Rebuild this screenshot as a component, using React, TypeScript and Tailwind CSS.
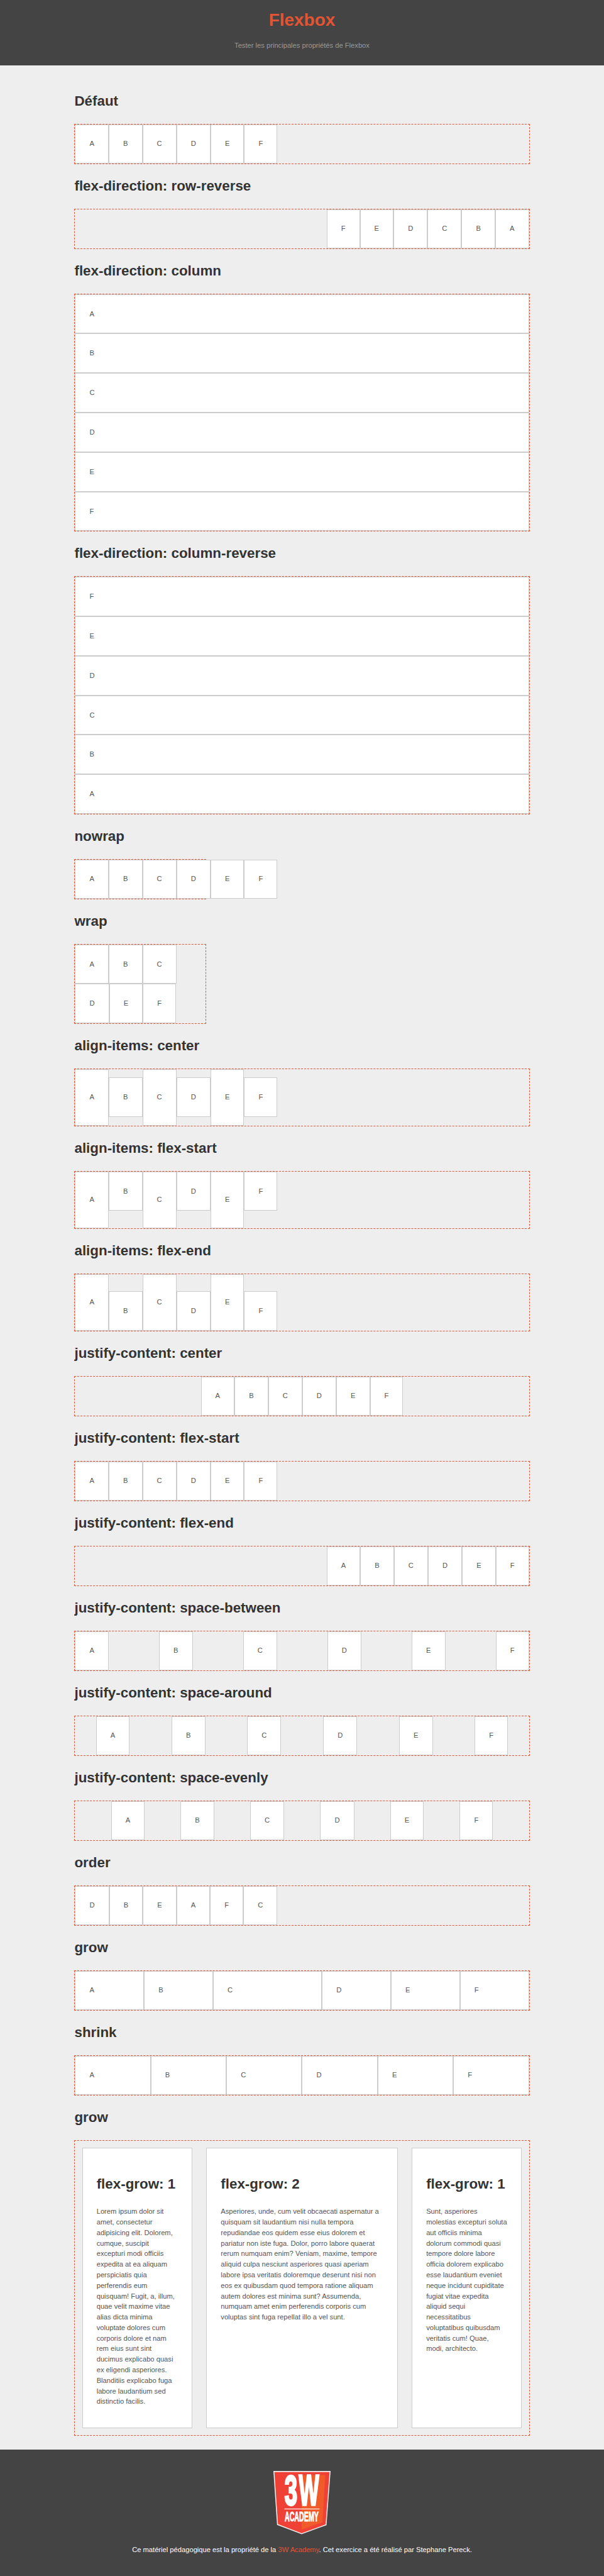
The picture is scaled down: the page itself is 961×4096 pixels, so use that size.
import type { ReactNode } from 'react';
import { clsx } from 'clsx';

const LETTERS = ['A', 'B', 'C', 'D', 'E', 'F'];

function Title({ children }: { children: ReactNode }) {
  return <h2 className="text-[22.37px] leading-[70.69px] font-bold text-[#333]">{children}</h2>;
}

function Item({ children, className }: { children: ReactNode; className?: string }) {
  return (
    <div
      className={clsx(
        'flex flex-col justify-center border border-[#ccc] bg-white px-[22.05px] text-[11.18px] leading-[16.78px]',
        className,
      )}
    >
      {children}
    </div>
  );
}

type DemoProps = {
  title: string;
  box?: string;
  items?: string[];
  itemClass?: (index: number) => string;
};

function Demo({ title, box = 'h-[64.32px]', items = LETTERS, itemClass }: DemoProps) {
  return (
    <section>
      <Title>{title}</Title>
      <div className={clsx('flex border border-dashed border-[#e25433]', box)}>
        {items.map((letter, i) => (
          <Item key={letter} className={itemClass?.(i)}>
            {letter}
          </Item>
        ))}
      </div>
    </section>
  );
}

function Card({ title, className, children }: { title: string; className: string; children: ReactNode }) {
  return (
    <article
      className={clsx(
        'mx-[11.18px] my-[11px] border border-[#ccc] bg-white px-[22.05px] pt-[22.1px] text-[11.18px] leading-[16.78px]',
        className,
      )}
    >
      <Title>{title}</Title>
      <p>{children}</p>
    </article>
  );
}

function Logo() {
  return (
    <svg
      viewBox="39 30 391 432"
      className="h-[100.6px] w-[91px] overflow-visible"
      preserveAspectRatio="none"
      aria-label="3W Academy"
    >
      <polygon points="39,30 430,30 402,400 232,462 64,398" fill="#f1f1f1" />
      <polygon points="46,37 423,37 396,395 232,455 70,393" fill="#ef4136" />
      <polygon points="232,58 394,58 374,380 232,430" fill="#f15a29" />
      <g fill="#fff" stroke="#fff" fontFamily="'Liberation Sans', Arial, sans-serif" fontWeight="700">
        <text transform="translate(115 264) scale(0.55 1)" fontSize="286" strokeWidth="14">
          3
        </text>
        <text transform="translate(213 264) scale(0.5 1)" fontSize="292" strokeWidth="14">
          W
        </text>
        <text transform="translate(116 373) scale(0.5 1)" fontSize="92" strokeWidth="4">
          ACADEMY
        </text>
      </g>
      <rect x="114" y="287" width="240" height="5" fill="#fff" />
    </svg>
  );
}

const tallOdd = (i: number) => (i % 2 === 0 ? 'h-[90.3px]' : 'h-[62.9px]');

export default function App() {
  return (
    <div className="flex h-[4096px] w-full flex-col bg-[#eee] font-['Liberation_Sans',Arial,sans-serif] text-[11.18px] leading-[16.78px] text-[#555]">
      <header className="flex h-[103.5px] shrink-0 flex-col items-center gap-[11.2px] bg-[#444] pt-[11.2px]">
        <h1 className="text-[27.96px] leading-[41.94px] font-bold text-[#e25433]">Flexbox</h1>
        <p className="text-[#999]">Tester les principales propriétés de Flexbox</p>
      </header>

      <main className="mx-auto flex w-[724.1px] shrink-0 flex-col py-[22.37px]">
        <Demo title="Défaut" />
        <Demo title="flex-direction: row-reverse" box="h-[64.32px] flex-row-reverse" />
        <Demo title="flex-direction: column" box="h-[378.9px] flex-col" itemClass={() => 'flex-1'} />
        <Demo title="flex-direction: column-reverse" box="h-[378.9px] flex-col-reverse" itemClass={() => 'flex-1'} />
        <Demo title="nowrap" box="h-[64.32px] w-[209.7px] flex-nowrap" />
        <Demo title="wrap" box="h-[127.2px] w-[209.7px] flex-wrap" />
        <Demo title="align-items: center" box="h-[92.3px] items-center" itemClass={tallOdd} />
        <Demo title="align-items: flex-start" box="h-[92.3px] items-start" itemClass={tallOdd} />
        <Demo title="align-items: flex-end" box="h-[92.3px] items-end" itemClass={tallOdd} />
        <Demo title="justify-content: center" box="h-[64.32px] justify-center" />
        <Demo title="justify-content: flex-start" box="h-[64.32px] justify-start" />
        <Demo title="justify-content: flex-end" box="h-[64.32px] justify-end" />
        <Demo title="justify-content: space-between" box="h-[64.32px] justify-between" />
        <Demo title="justify-content: space-around" box="h-[64.32px] justify-around" />
        <Demo title="justify-content: space-evenly" box="h-[64.32px] justify-evenly" />
        <Demo title="order" items={['D', 'B', 'E', 'A', 'F', 'C']} />
        <Demo title="grow" itemClass={(i) => (i === 2 ? 'flex-2' : 'flex-1')} />
        <Demo title="shrink" itemClass={() => 'w-[209.7px] shrink'} />

        <section>
          <Title>grow</Title>
          <div className="flex h-[470.6px] border border-dashed border-[#e25433]">
            <Card title="flex-grow: 1" className="flex-1">
              Lorem ipsum dolor sit amet, consectetur adipisicing elit. Dolorem, cumque, suscipit excepturi modi
              officiis expedita at ea aliquam perspiciatis quia perferendis eum quisquam! Fugit, a, illum, quae velit
              maxime vitae alias dicta minima voluptate dolores cum corporis dolore et nam rem eius sunt sint ducimus
              explicabo quasi ex eligendi asperiores. Blanditiis explicabo fuga labore laudantium sed distinctio
              facilis.
            </Card>
            <Card title="flex-grow: 2" className="flex-2">
              Asperiores, unde, cum velit obcaecati aspernatur a quisquam sit laudantium nisi nulla tempora
              repudiandae eos quidem esse eius dolorem et pariatur non iste fuga. Dolor, porro labore quaerat rerum
              numquam enim? Veniam, maxime, tempore aliquid culpa nesciunt asperiores quasi aperiam labore ipsa
              veritatis doloremque deserunt nisi non eos ex quibusdam quod tempora ratione aliquam autem dolores est
              minima sunt? Assumenda, numquam amet enim perferendis corporis cum voluptas sint fuga repellat illo a vel
              sunt.
            </Card>
            <Card title="flex-grow: 1" className="flex-1">
              Sunt, asperiores molestias excepturi soluta aut officiis minima dolorum commodi quasi tempore dolore
              labore officia dolorem explicabo esse laudantium eveniet neque incidunt cupiditate fugiat vitae expedita
              aliquid sequi necessitatibus voluptatibus quibusdam veritatis cum! Quae, modi, architecto.
            </Card>
          </div>
        </section>
      </main>

      <footer className="flex flex-1 flex-col items-center gap-[16px] bg-[#444] pt-[33.5px] text-white">
        <Logo />
        <p>
          Ce matériel pédagogique est la propriété de la <a className="text-[#e25433]">3W Academy</a>. Cet exercice a
          été réalisé par Stephane Pereck.
        </p>
      </footer>
    </div>
  );
}
